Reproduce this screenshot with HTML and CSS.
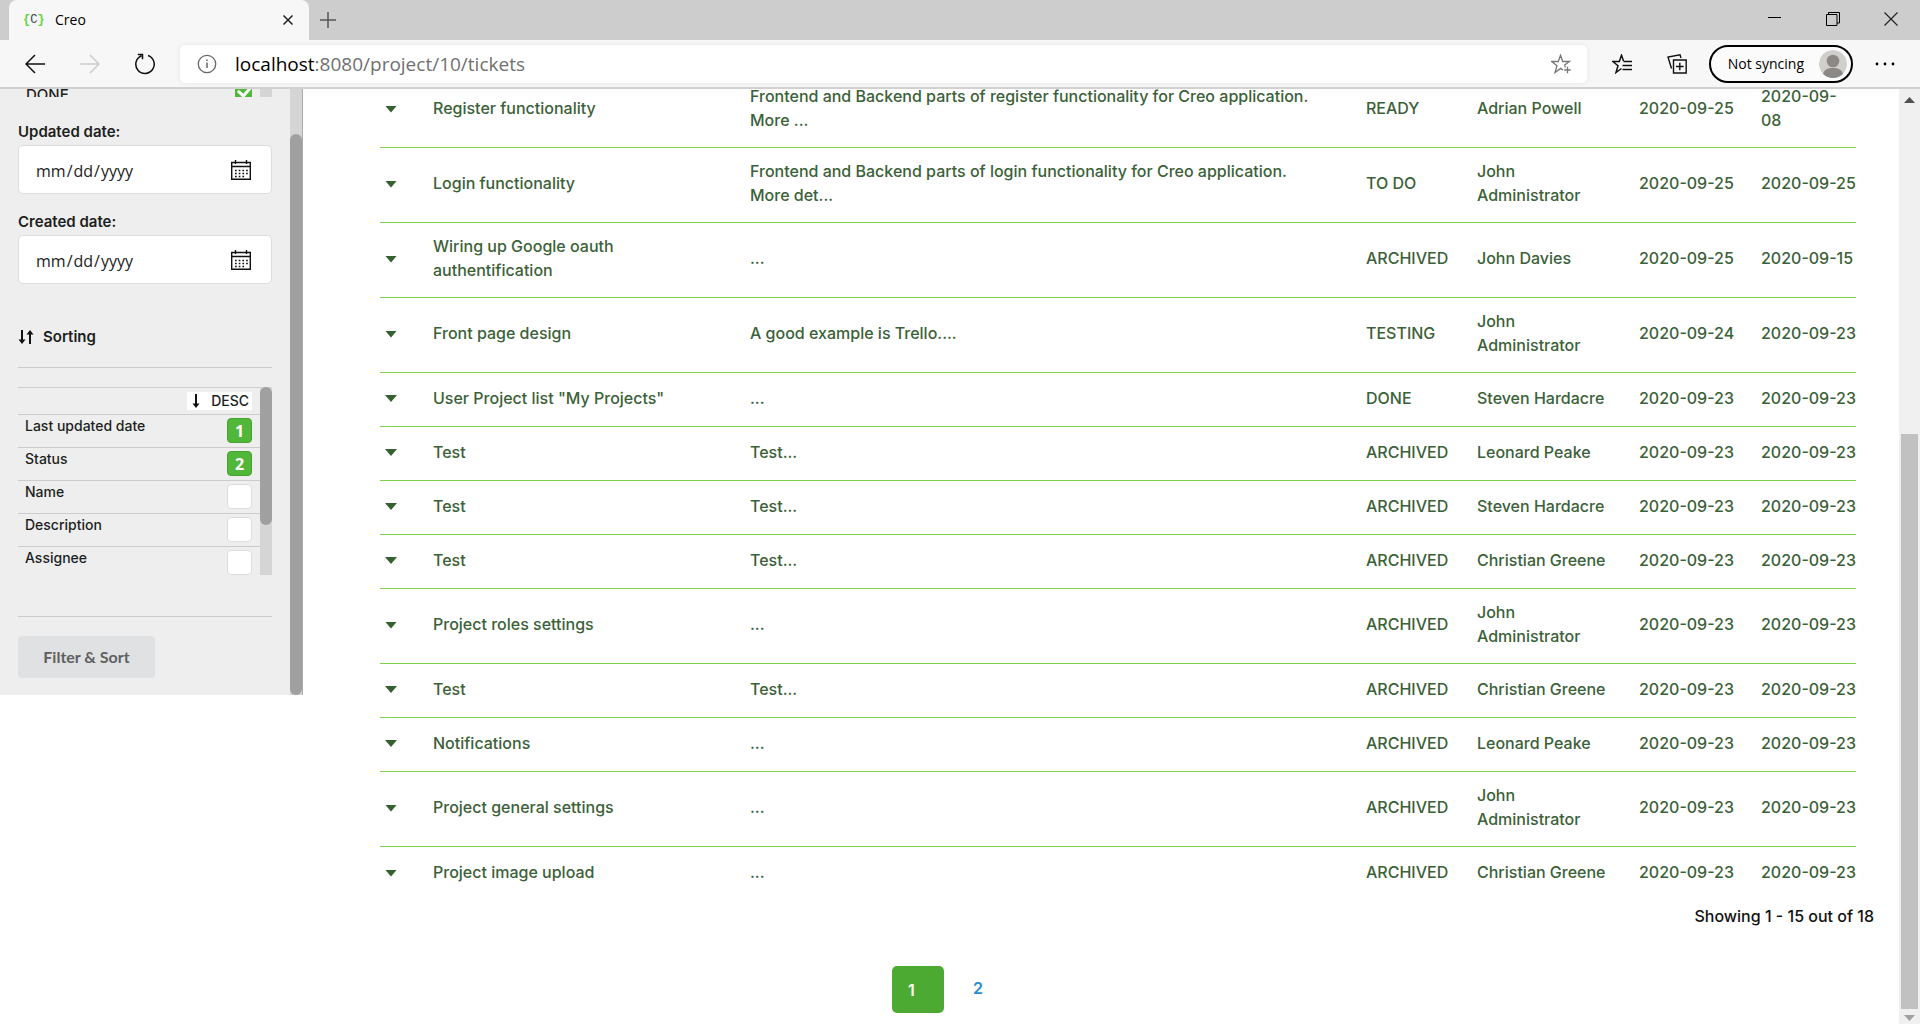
FILE: index.html
```html
<!DOCTYPE html>
<html lang="en">
<head>
<meta charset="utf-8">
<title>Creo</title>
<link rel="stylesheet" href="styles.css">
</head>
<body>
<header class="browser">
  <div class="tabstrip">
    <div class="tab">
      <span class="favicon"><b>{</b><i>C</i><b>}</b></span>
      <span class="tab-title">Creo</span>
      <button class="plain" aria-label="Close tab"><svg width="12" height="12" viewBox="0 0 12 12"><path d="M1.5 1.5l9 9M10.500 1.500l-9 9" stroke="#222" stroke-width="1.500"/></svg></button>
    </div>
    <button class="plain new-tab" aria-label="New tab"><svg width="18" height="18" viewBox="0 0 18 18"><path d="M9 1v16M1 9h16" stroke="#555" stroke-width="1.500"/></svg></button>
    <div class="window-buttons">
      <button class="plain" aria-label="Minimize"><svg width="14" height="14" viewBox="0 0 14 14"><path d="M0 5.500h13" stroke="#000"/></svg></button>
      <button class="plain" aria-label="Restore"><svg width="14" height="14" viewBox="0 0 14 14"><path d="M.5 2.500h10.500v11H.5zM2.500 2.500V.5h11V11H11" stroke="#000" fill="none"/></svg></button>
      <button class="plain" aria-label="Close window"><svg width="14" height="14" viewBox="0 0 14 14"><path d="M.5.5l13 13M13.500.5l-13 13" stroke="#222" stroke-width="1.200"/></svg></button>
    </div>
  </div>
  <div class="toolbar">
    <div class="nav-buttons">
      <button class="plain" aria-label="Back"><svg width="20" height="20" viewBox="0 0 20 20"><path d="M10 1L1 10l9 9M1 10h19" stroke="#111" stroke-width="1.500" fill="none"/></svg></button>
      <button class="plain" aria-label="Forward" disabled><svg width="20" height="20" viewBox="0 0 20 20"><path d="M10 1l9 9-9 9M19 10H0" stroke="#ccc" stroke-width="1.500" fill="none"/></svg></button>
      <button class="plain" aria-label="Reload"><svg width="20" height="22" viewBox="0 0 20 22"><path d="M13 2.500A9.200 9.200 0 1 1 6.500 2.700M2.800 1.500H7.500v4.700" stroke="#111" stroke-width="1.500" fill="none"/></svg></button>
    </div>
    <div class="address">
      <svg width="20" height="20" viewBox="0 0 20 20"><circle cx="10" cy="10" r="8.700" stroke="#666" stroke-width="1.300" fill="none"/><path d="M10 8.500V14M10 5.500v1.600" stroke="#666" stroke-width="1.500"/></svg>
      <a class="url" href="#"><span>localhost</span>:8080/project/10/tickets</a>
      <button class="plain" aria-label="Add to favorites"><svg width="20" height="20" viewBox="0 0 20 20"><path d="M12 16l-2.300-1.600L4 18.500l2-6.800L.8 7.500h6.500L9.500 1.200l2.200 6.300h6.500l-4.500 3.600.7 2.400M13.200 16h6.500M16.500 12.700v6.500" stroke="#777" stroke-width="1.300" fill="none"/></svg></button>
    </div>
    <div class="tools">
      <button class="plain" aria-label="Favorites"><svg width="21" height="20" viewBox="0 0 21 20"><path d="M9.500 14.500L4 18.500l2-6.800L.8 7.500h6.500L9.500 1.200l2 5.800M11.500 7.500H20M10.500 11.500H20M10.500 15.500H20" stroke="#111" stroke-width="1.500" fill="none"/></svg></button>
      <button class="plain" aria-label="Collections"><svg width="20" height="20" viewBox="0 0 20 20"><path d="M6.500 6h12.700v13H6.500zM12.800 8.700v7.600M9 12.500h7.600M4.500 14.500L1 3l12-2.200 1 3.200" stroke="#111" stroke-width="1.400" fill="none"/></svg></button>
      <button class="profile">Not syncing
        <svg width="28" height="28" viewBox="0 0 28 28"><defs><clipPath id="face"><circle cx="14" cy="14" r="14"/></clipPath></defs><g clip-path="url(#face)"><circle cx="14" cy="14" r="14" fill="#d0cfcc"/><circle cx="14" cy="11" r="6.300" fill="#8b8886"/><path d="M3.500 26c1-6.500 5.500-8 10.500-8s9.500 1.500 10.500 8l-4 3h-13z" fill="#8b8886"/></g></svg>
      </button>
      <button class="plain" aria-label="More"><svg width="20" height="4" viewBox="0 0 20 4"><circle cx="2" cy="2" r="1.400"/><circle cx="10" cy="2" r="1.400"/><circle cx="18" cy="2" r="1.400"/></svg></button>
    </div>
  </div>
</header>

<div class="viewport">
  <aside class="sidebar">
    <form class="filters">
      <div class="status-list">
        <label for="done">DONE</label>
        <input type="checkbox" id="done" checked>
        <span class="mini-track"></span>
      </div>
      <label class="field-label" for="updated">Updated date:</label>
      <div class="date-field">
        <input type="date" id="updated">
        <svg width="20" height="20" viewBox="0 0 20 20"><path d="M.7 2.500h18.600v16.800H.7zM.7 6.500h18.600M4.500 0v4M15.500 0v4" stroke="#111" stroke-width="1.400" fill="none"/><path d="M4 10.500h13M4 13.500h13M4 16.500h10" stroke="#111" stroke-width="1.700" stroke-dasharray="1.700 2"/></svg>
      </div>
      <label class="field-label" for="created">Created date:</label>
      <div class="date-field">
        <input type="date" id="created">
        <svg width="20" height="20" viewBox="0 0 20 20"><path d="M.7 2.500h18.600v16.800H.7zM.7 6.500h18.600M4.500 0v4M15.500 0v4" stroke="#111" stroke-width="1.400" fill="none"/><path d="M4 10.500h13M4 13.500h13M4 16.500h10" stroke="#111" stroke-width="1.700" stroke-dasharray="1.700 2"/></svg>
      </div>
      <h2 class="sorting"><svg width="16" height="16" viewBox="0 0 16 16"><path d="M4 1v10M12 15V5" stroke="#111" stroke-width="2"/><path d="M.5 10.500h7L4 15zM8.500 5.500h7L12 1z" fill="#111"/></svg>Sorting</h2>
      <div class="sort-box">
        <div class="sort-list">
          <div class="direction"><button type="button"><svg width="8" height="14" viewBox="0 0 8 14"><path d="M4 0v10" stroke="#111" stroke-width="2"/><path d="M.5 9.500h7L4 14z" fill="#111"/></svg>DESC</button></div>
          <div class="sort-row"><span>Last updated date</span><button type="button" class="order on">1</button></div>
          <div class="sort-row"><span>Status</span><button type="button" class="order on">2</button></div>
          <div class="sort-row"><span>Name</span><button type="button" class="order" aria-label="Sort by name"></button></div>
          <div class="sort-row"><span>Description</span><button type="button" class="order" aria-label="Sort by description"></button></div>
          <div class="sort-row"><span>Assignee</span><button type="button" class="order" aria-label="Sort by assignee"></button></div>
        </div>
        <div class="mini-track"><div class="mini-thumb"></div></div>
      </div>
      <div class="submit"><button type="submit">Filter &amp; Sort</button></div>
    </form>
    <div class="side-track"><div class="side-thumb"></div></div>
  </aside>

  <main class="content">
    <table class="tickets">
      <colgroup><col class="c-toggle"><col class="c-name"><col><col class="c-status"><col class="c-assignee"><col class="c-date"><col class="c-last"></colgroup>
      <tbody>
        <tr><td><button class="caret" aria-label="Expand"></button></td><td>Register functionality</td><td class="desc">Frontend and Backend parts of register functionality for Creo application. More ...</td><td>READY</td><td>Adrian Powell</td><td class="date">2020-09-25</td><td class="date">2020-09-<br>08</td></tr>
        <tr><td><button class="caret" aria-label="Expand"></button></td><td>Login functionality</td><td class="desc">Frontend and Backend parts of login functionality for Creo application. More det...</td><td>TO DO</td><td>John Administrator</td><td class="date">2020-09-25</td><td class="date">2020-09-25</td></tr>
        <tr><td><button class="caret" aria-label="Expand"></button></td><td>Wiring up Google oauth authentification</td><td class="desc">...</td><td>ARCHIVED</td><td>John Davies</td><td class="date">2020-09-25</td><td class="date">2020-09-15</td></tr>
        <tr><td><button class="caret" aria-label="Expand"></button></td><td>Front page design</td><td class="desc">A good example is Trello....</td><td>TESTING</td><td>John Administrator</td><td class="date">2020-09-24</td><td class="date">2020-09-23</td></tr>
        <tr><td><button class="caret" aria-label="Expand"></button></td><td>User Project list "My Projects"</td><td class="desc">...</td><td>DONE</td><td>Steven Hardacre</td><td class="date">2020-09-23</td><td class="date">2020-09-23</td></tr>
        <tr><td><button class="caret" aria-label="Expand"></button></td><td>Test</td><td class="desc">Test...</td><td>ARCHIVED</td><td>Leonard Peake</td><td class="date">2020-09-23</td><td class="date">2020-09-23</td></tr>
        <tr><td><button class="caret" aria-label="Expand"></button></td><td>Test</td><td class="desc">Test...</td><td>ARCHIVED</td><td>Steven Hardacre</td><td class="date">2020-09-23</td><td class="date">2020-09-23</td></tr>
        <tr><td><button class="caret" aria-label="Expand"></button></td><td>Test</td><td class="desc">Test...</td><td>ARCHIVED</td><td>Christian Greene</td><td class="date">2020-09-23</td><td class="date">2020-09-23</td></tr>
        <tr><td><button class="caret" aria-label="Expand"></button></td><td>Project roles settings</td><td class="desc">...</td><td>ARCHIVED</td><td>John Administrator</td><td class="date">2020-09-23</td><td class="date">2020-09-23</td></tr>
        <tr><td><button class="caret" aria-label="Expand"></button></td><td>Test</td><td class="desc">Test...</td><td>ARCHIVED</td><td>Christian Greene</td><td class="date">2020-09-23</td><td class="date">2020-09-23</td></tr>
        <tr><td><button class="caret" aria-label="Expand"></button></td><td>Notifications</td><td class="desc">...</td><td>ARCHIVED</td><td>Leonard Peake</td><td class="date">2020-09-23</td><td class="date">2020-09-23</td></tr>
        <tr><td><button class="caret" aria-label="Expand"></button></td><td>Project general settings</td><td class="desc">...</td><td>ARCHIVED</td><td>John Administrator</td><td class="date">2020-09-23</td><td class="date">2020-09-23</td></tr>
        <tr><td><button class="caret" aria-label="Expand"></button></td><td>Project image upload</td><td class="desc">...</td><td>ARCHIVED</td><td>Christian Greene</td><td class="date">2020-09-23</td><td class="date">2020-09-23</td></tr>
      </tbody>
    </table>
    <p class="summary">Showing 1 - 15 out of 18</p>
    <nav class="pages"><a class="current" href="#">1</a><a href="#">2</a></nav>
  </main>

  <div class="page-track"><span class="arrow up"></span><div class="page-thumb"></div><span class="arrow down"></span></div>
</div>
</body>
</html>
```
FILE: styles.css
```css
* { box-sizing: border-box; }
body {
  margin: 0;
  height: 100vh;
  display: flex;
  flex-direction: column;
  overflow: hidden;
  background: #fff;
  color: #1d1f1d;
  font: 500 16px/24px Inter, "Open Sans", sans-serif;
}
button { font: inherit; color: inherit; cursor: pointer; }
svg { display: block; flex: none; }
.plain { display: block; border: 0; padding: 0; background: none; }

/* Browser frame */
.browser {
  flex: none;
  background: #f7f7f7;
  border-bottom: 2px solid #d0d0d0;
  font: 400 14px/20px "Open Sans", "Noto Sans", sans-serif;
  color: #000;
}
.tabstrip { display: flex; height: 40px; padding-left: 9px; background: #cdcdcd; }
.tab {
  display: flex;
  align-items: center;
  width: 300px;
  padding: 0 15px 0 14px;
  border-radius: 8px 8px 0 0;
  background: #f7f7f7;
}
.favicon { display: flex; width: 32px; font: 400 12px/20px "Liberation Mono", monospace; }
.favicon b { color: #5cd63c; }
.favicon i { color: #444; font-style: normal; }
.tab-title { flex: 1; }
.new-tab { margin-left: 10px; }
.window-buttons { display: flex; gap: 44px; margin-left: auto; padding: 12px 22px 14px 0; }
.toolbar { display: flex; align-items: center; height: 47px; padding: 0 25px 0 25px; }
.nav-buttons { display: flex; align-items: center; gap: 35px; width: 155px; }
.address {
  display: flex;
  flex: 1;
  align-items: center;
  height: 38px;
  padding: 0 16px 0 17px;
  border-radius: 5px;
  background: #fff;
  box-shadow: 0 0 5px #e4e4e4;
}
.url { flex: 1; padding-left: 18px; font-size: 19px; line-height: 26px; color: #707070; text-decoration: none; }
.url span { color: #000; }
.tools { display: flex; align-items: center; padding-left: 25px; gap: 34px; }
.profile {
  display: flex;
  align-items: center;
  gap: 15px;
  height: 38px;
  margin: 0 -12px;
  padding: 0 4px 0 17px;
  border: 2px solid #000;
  border-radius: 19px;
  background: #fbfbfb;
}

/* Page */
.viewport { display: flex; flex: 1; min-height: 0; align-items: flex-start; }
.sidebar { display: flex; flex: none; width: 303px; background: #eee; border-right: 1px solid #ababab; }
.filters { flex: 1; padding: 0 18px 17px; min-width: 0; }
.status-list { display: flex; height: 8px; padding-left: 8px; overflow: hidden; font-size: 15px; line-height: 11px; }
.status-list label { flex: 1; }
.status-list input {
  appearance: none;
  align-self: flex-end;
  width: 17px;
  height: 17px;
  margin: 0 8px 0 0;
  background: #50b738;
}
.status-list input::before {
  content: "";
  display: block;
  width: 6px;
  height: 13px;
  margin: 1px 0 0 6px;
  border: solid #fff;
  border-width: 0 3px 3px 0;
  transform: rotate(42deg);
}
.mini-track { flex: none; width: 12px; background: #d5d5d5; }
.mini-thumb { height: 138px; border-radius: 6px; background: #a0a0a0; }
.field-label { display: block; padding: 23px 0 1px; font-size: 15px; font-weight: 600; line-height: 24px; }
.date-field + .field-label { padding-top: 16px; }
.date-field {
  display: flex;
  align-items: center;
  height: 49px;
  padding: 0 20px 0 16px;
  border: 1px solid #ddd;
  border-radius: 5px;
  background: #fff;
}
.date-field input {
  flex: 1;
  min-width: 0;
  padding: 2px 0 0;
  border: 0;
  background: none;
  color: #222;
  font: 400 16px/24px "Open Sans", sans-serif;
}
.date-field input::-webkit-calendar-picker-indicator { display: none; }
.sorting {
  display: flex;
  align-items: center;
  gap: 9px;
  margin: 41px 0 19px;
  padding-bottom: 18px;
  border-bottom: 1px solid #ccc;
  font-size: 15px;
  font-weight: 600;
  line-height: 24px;
}
.sort-box { display: flex; height: 188px; overflow: hidden; }
.sort-list { flex: 1; }
.direction { display: flex; justify-content: flex-end; height: 27px; padding: 4px 8px 4px 0; border-top: 1px solid #ccc; }
.direction button {
  display: flex;
  align-items: center;
  gap: 11px;
  padding: 0 3px 0 5px;
  border: 0;
  background: #fff;
  font-size: 14px;
  line-height: 18px;
}
.sort-row {
  display: flex;
  justify-content: space-between;
  height: 33px;
  padding: 3px 8px 0 7px;
  border-top: 1px solid #ccc;
  font-size: 14px;
  line-height: 16px;
}
.order {
  width: 25px;
  height: 25px;
  padding: 0;
  border: 1px solid #ddd;
  border-radius: 4px;
  background: #fff;
  color: #fff;
  font: 700 16px/22px "Open Sans", sans-serif;
}
.order.on { background: #50b738; border-color: #46a331; }
.submit { margin-top: 41px; padding-top: 19px; border-top: 1px solid #ccc; }
.submit button {
  display: block;
  width: 137px;
  height: 42px;
  border: 0;
  border-radius: 4px;
  background: #dfe1e2;
  color: #5f5f5f;
  font: 700 16px/24px Lato, sans-serif;
}
.side-track { display: flex; align-items: flex-end; width: 12px; background: #d5d5d5; }
.side-thumb { width: 12px; height: calc(100% - 45px); border-radius: 6px; background: #a0a0a0; }

/* Ticket table, scrolled part of a row down */
.content { flex: 1; min-width: 0; margin-top: -16px; }
.tickets { width: calc(100% - 120px); margin-left: 77px; table-layout: fixed; border-collapse: separate; border-spacing: 0; color: #3b6139; }
.c-toggle { width: 53px; }
.c-name { width: 317px; }
.c-status { width: 111px; }
.c-assignee { width: 162px; }
.c-date { width: 122px; }
.c-last { width: 95px; }
.tickets td { height: 54px; padding: 11px 24px 15px 0; border-bottom: 1px solid #7ed348; vertical-align: middle; }
.tickets tr:last-child td { border-bottom: 0; }
.tickets .desc { padding-right: 44px; }
.tickets .date { padding-right: 0; white-space: nowrap; }
.caret {
  display: block;
  width: 12px;
  height: 7px;
  margin: 2px 0 0 5px;
  padding: 0;
  border: 0;
  background: #35602f;
  clip-path: polygon(0 0, 100% 0, 50% 100%);
}
.summary { margin: 3px 25px 0 0; text-align: right; color: #111; }
.pages { display: flex; justify-content: center; gap: 9px; margin: 38px 305px 0 0; font-weight: 600; line-height: 20px; }
.pages a { width: 52px; padding: 12px 20px 15px; color: #2a8cc8; text-decoration: none; }
.pages .current { padding: 14px 16px 13px; border-radius: 5px; background: #4caa33; color: #fff; }

.page-track {
  display: flex;
  flex-direction: column;
  align-items: center;
  align-self: stretch;
  flex: none;
  width: 21px;
  padding: 8px 0 3px;
  background: #f0f0f0;
}
.page-thumb { width: 17px; flex: 1; margin: 331px 0 6px; background: #c1c1c1; }
.arrow { width: 11px; height: 6px; }
.up { background: #505050; clip-path: polygon(50% 0, 100% 100%, 0 100%); }
.down { background: #a0a0a0; clip-path: polygon(0 0, 100% 0, 50% 100%); }
```
